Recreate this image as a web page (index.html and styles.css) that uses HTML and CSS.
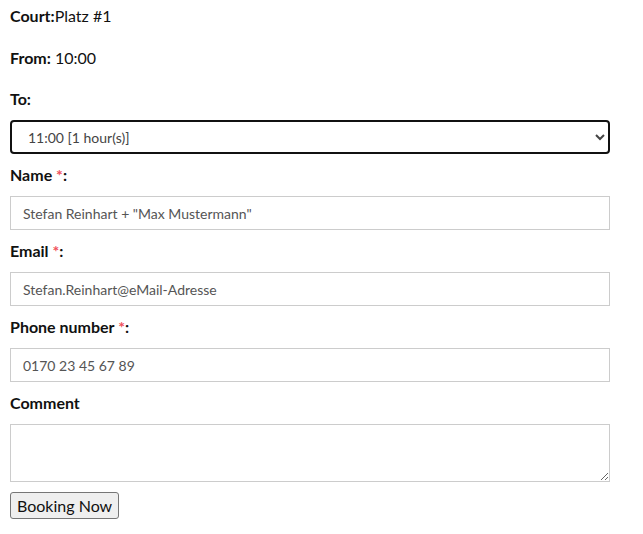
FILE: index.html
```html
<!DOCTYPE html>
<html>
<head>
<meta charset="utf-8">
<link rel="stylesheet" href="styles.css">
</head>
<body>
<form class="booking">
  <p class="info first"><b>Court:</b>Platz #1</p>
  <p class="info"><b>From:</b> 10:00</p>
  <label class="lbl">To:</label>
  <select class="field sel">
    <option>11:00 [1 hour(s)]</option>
  </select>
  <label class="lbl">Name <span class="req">*</span>:</label>
  <input class="field" type="text" value='Stefan Reinhart + "Max Mustermann"'>
  <label class="lbl">Email <span class="req">*</span>:</label>
  <input class="field" type="text" value="Stefan.Reinhart@eMail-Adresse">
  <label class="lbl">Phone number <span class="req">*</span>:</label>
  <input class="field" type="text" value="0170 23 45 67 89">
  <label class="lbl">Comment</label>
  <textarea class="field area"></textarea>
  <div><button type="button" class="btn">Booking Now</button></div>
</form>
</body>
</html>
```

FILE: styles.css
```css
html, body {
  margin: 0;
  padding: 0;
  background: #fff;
}
body {
  padding: 6px 10px 0 10px;
  font-family: Lato, "Noto Sans", sans-serif;
  font-size: 16px;
  line-height: 20px;
  color: #111;
}
.booking {
  display: flex;
  flex-direction: column;
  width: 600px;
}
.info {
  margin: 0 0 22px 0;
  height: 20px;
}
.info b, .lbl {
  font-weight: bold;
}
.info + .lbl {
  margin-top: -1px;
}
.lbl {
  display: block;
  height: 20px;
  margin: 0 0 11px 0;
}
.req {
  color: #f0505a;
}
.field {
  box-sizing: border-box;
  width: 600px;
  height: 34px;
  margin: 0 0 11px 0;
  border: 1px solid #ccc;
  border-radius: 0;
  padding: 0 12px;
  font-family: Lato, "Noto Sans", sans-serif;
  font-size: 14px;
  color: #555;
  background: #fff;
  outline: none;
}
.sel {
  border: 2px solid #111;
  border-radius: 4px;
  padding: 0 12px;
  color: #444;
}
.area {
  height: 58px;
  margin-bottom: 10px;
  padding: 6px 12px;
  resize: both;
}
.btn {
  font-family: Lato, "Noto Sans", sans-serif;
  font-size: 16px;
  color: #111;
  height: 27px;
  padding: 1px 6px;
  border: 1px solid #767676;
  border-radius: 3px;
  background: #efefef;
}
```
